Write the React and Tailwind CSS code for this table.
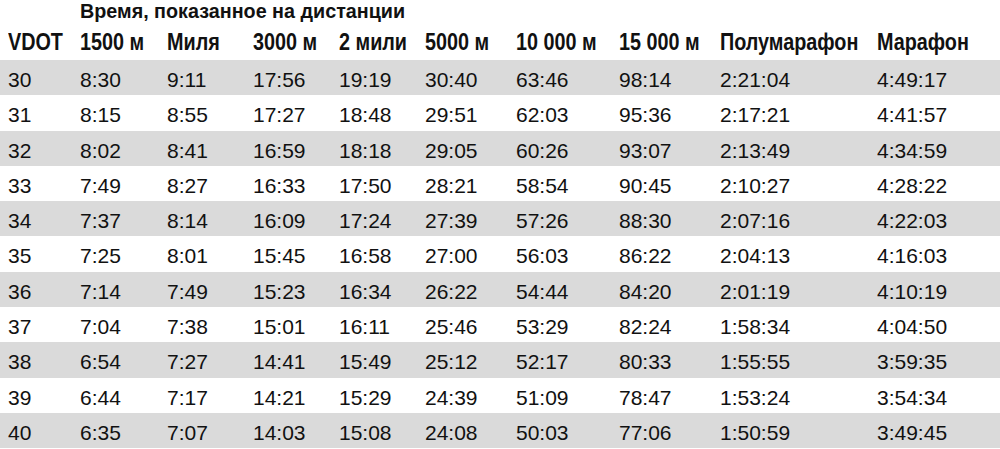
const headers = ["VDOT", "1500 м", "Миля", "3000 м", "2 мили", "5000 м", "10 000 м", "15 000 м", "Полумарафон", "Марафон"];

const rows = [
    ["30", "8:30", "9:11", "17:56", "19:19", "30:40", "63:46", "98:14", "2:21:04", "4:49:17"],
    ["31", "8:15", "8:55", "17:27", "18:48", "29:51", "62:03", "95:36", "2:17:21", "4:41:57"],
    ["32", "8:02", "8:41", "16:59", "18:18", "29:05", "60:26", "93:07", "2:13:49", "4:34:59"],
    ["33", "7:49", "8:27", "16:33", "17:50", "28:21", "58:54", "90:45", "2:10:27", "4:28:22"],
    ["34", "7:37", "8:14", "16:09", "17:24", "27:39", "57:26", "88:30", "2:07:16", "4:22:03"],
    ["35", "7:25", "8:01", "15:45", "16:58", "27:00", "56:03", "86:22", "2:04:13", "4:16:03"],
    ["36", "7:14", "7:49", "15:23", "16:34", "26:22", "54:44", "84:20", "2:01:19", "4:10:19"],
    ["37", "7:04", "7:38", "15:01", "16:11", "25:46", "53:29", "82:24", "1:58:34", "4:04:50"],
    ["38", "6:54", "7:27", "14:41", "15:49", "25:12", "52:17", "80:33", "1:55:55", "3:59:35"],
    ["39", "6:44", "7:17", "14:21", "15:29", "24:39", "51:09", "78:47", "1:53:24", "3:54:34"],
    ["40", "6:35", "7:07", "14:03", "15:08", "24:08", "50:03", "77:06", "1:50:59", "3:49:45"],
];

const cols = "grid grid-cols-[72px_87px_86px_86px_86px_91px_103px_101px_157px_123px] pl-[8px]";

export default function App() {
    return (
        <div className="w-[1000px] h-[449px] bg-white text-[#111] overflow-hidden font-['Liberation_Sans',Arial,sans-serif]">
            <div className="h-[25px] pl-[80px] -mt-[2px] font-bold text-[21px] leading-[25px]">
                <span className="inline-block origin-left scale-x-[0.94] whitespace-nowrap">Время, показанное на дистанции</span>
            </div>
            <div className={`${cols} h-[37px] pt-[2px] font-bold text-[23px] leading-[35px]`}>
                {headers.map((h) => (
                    <div key={h} className="whitespace-nowrap">
                        <span className="inline-block origin-left scale-x-[0.86]">{h}</span>
                    </div>
                ))}
            </div>
            <div className="text-[21px]">
                {rows.map((row, i) => (
                    <div key={row[0]} className={`${cols} h-[35.3px] pt-[2px] leading-[35px] ${i % 2 === 0 ? "bg-[#dadada]" : "bg-white"}`}>
                        {row.map((cell, j) => (
                            <div key={j} className="whitespace-nowrap">{cell}</div>
                        ))}
                    </div>
                ))}
            </div>
        </div>
    );
}
